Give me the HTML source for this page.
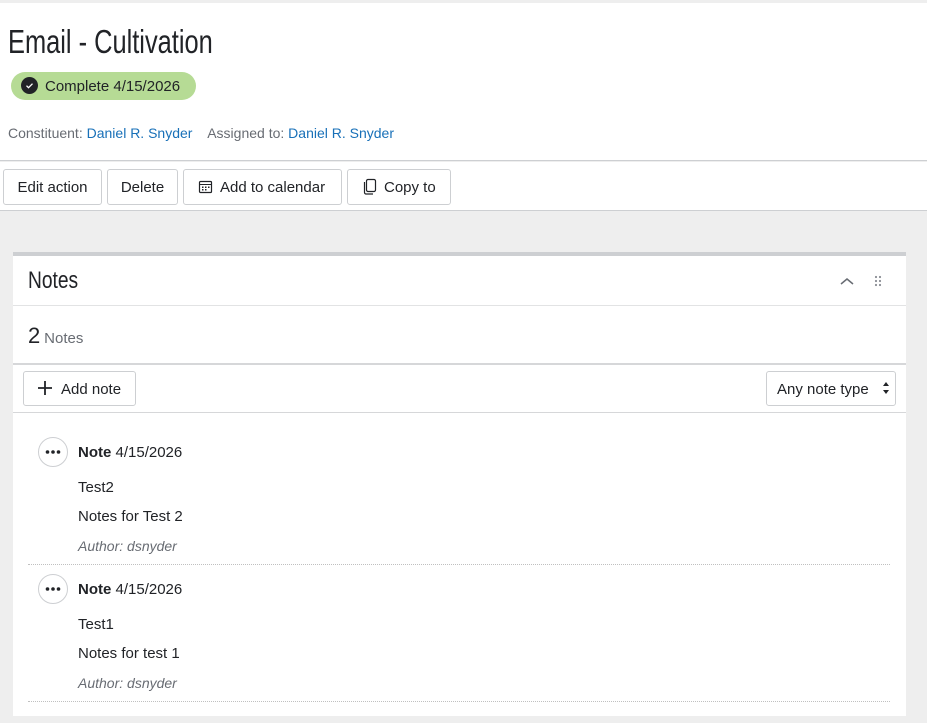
<!DOCTYPE html>
<html><head><meta charset="utf-8"><style>
*{box-sizing:border-box;margin:0;padding:0}
body{width:927px;height:723px;background:#eeeeee;font-family:"Liberation Sans",sans-serif;color:#212327;position:relative;overflow:hidden;font-size:14px}
.a{position:absolute}
.hdr{left:0;top:3px;width:927px;height:158px;background:#fff;border-bottom:1px solid #cdcfd2}
.tb{left:0;top:162px;width:927px;height:49px;background:#fff;border-bottom:1px solid #cdcfd2}
.btn{position:absolute;top:169px;height:36px;border:1px solid #cdcfd2;border-radius:3px;background:#fff;font-size:15px;line-height:36px;color:#212327;white-space:nowrap}
.nar{display:inline-block;transform-origin:left center;transform:scaleX(.84)}
.link{color:#1870b8}
.panel{left:13px;top:252px;width:893px;height:464px;background:#fff;border-top:4px solid #cdcfd2}
.hr{position:absolute;left:13px;width:893px;height:1px;background:#e2e3e4}
.dot{position:absolute;left:28px;width:862px;border-top:1px dotted #c0c0c0}
.circ{position:absolute;left:38px;width:30px;height:30px;border:1px solid #cdcfd2;border-radius:50%}
.t{position:absolute;left:78px;font-size:15px;white-space:nowrap}
</style></head><body>
<div class="a hdr"></div>
<div class="a" style="left:8px;top:23px;font-size:33px;white-space:nowrap"><span class="nar" style="transform:scaleX(.77)">Email - Cultivation</span></div>
<div class="a" style="left:11px;top:72px;width:185px;height:28px;background:#b6db95;border-radius:14px"></div>
<div class="a" style="left:21px;top:77px;width:17px;height:17px;background:#212327;border-radius:50%"><svg width="17" height="17"><path d="M5.5 8.7l2 2 4-4" stroke="#fff" stroke-width="1.3" fill="none"/></svg></div>
<div class="a" style="left:45px;top:78px;font-size:15px;white-space:nowrap">Complete 4/15/2026</div>
<div class="a" style="left:8px;top:125px;font-size:14px;color:#686c73;white-space:nowrap">Constituent: <span class="link">Daniel R. Snyder</span>&nbsp;&nbsp;&nbsp; Assigned to: <span class="link">Daniel R. Snyder</span></div>
<div class="a tb"></div>
<div class="btn" style="left:3px;width:99px;text-align:center">Edit action</div>
<div class="btn" style="left:107px;width:71px;text-align:center">Delete</div>
<div class="btn" style="left:183px;width:159px;padding-left:36px">Add to calendar</div>
<svg class="a" style="left:198px;top:179px" width="16" height="16"><rect x="1.5" y="2.5" width="12" height="11" rx="1" fill="none" stroke="#212327" stroke-width="1.2"/><line x1="1.5" y1="5.5" x2="13.5" y2="5.5" stroke="#212327"/><g fill="#212327"><rect x="4" y="7.5" width="1.5" height="1.5"/><rect x="7" y="7.5" width="1.5" height="1.5"/><rect x="10" y="7.5" width="1.5" height="1.5"/><rect x="4" y="10" width="1.5" height="1.5"/><rect x="7" y="10" width="1.5" height="1.5"/></g></svg>
<div class="btn" style="left:347px;width:104px;padding-left:36px">Copy to</div>
<svg class="a" style="left:362px;top:178px" width="16" height="18"><rect x="4.5" y="1.5" width="9" height="12" rx="1.5" fill="none" stroke="#212327" stroke-width="1.2"/><path d="M2.5 4v10.5a1.5 1.5 0 0 0 1.5 1.5h7" fill="none" stroke="#212327" stroke-width="1.2"/></svg>
<div class="a panel"></div>
<div class="a" style="left:28px;top:267px;font-size:24px;white-space:nowrap"><span class="nar" style="transform:scaleX(.8)">Notes</span></div>
<svg class="a" style="left:839px;top:275px" width="16" height="12"><path d="M2 9l6-5 6 5" stroke="#686c73" stroke-width="1.5" fill="none"/></svg>
<svg class="a" style="left:874px;top:275px" width="8" height="14" fill="#8a8e94"><circle cx="2" cy="2" r="1.1"/><circle cx="6" cy="2" r="1.1"/><circle cx="2" cy="6" r="1.1"/><circle cx="6" cy="6" r="1.1"/><circle cx="2" cy="10" r="1.1"/><circle cx="6" cy="10" r="1.1"/></svg>
<div class="hr" style="top:305px"></div>
<div class="a" style="left:28px;top:323px;white-space:nowrap"><span style="font-size:22px">2</span> <span style="font-size:15px;color:#686c73">Notes</span></div>
<div class="hr" style="top:363px;height:2px;background:#d6d7d9"></div>
<div class="btn" style="left:23px;top:371px;width:113px;height:35px;padding-left:37px;line-height:35px">Add note</div>
<svg class="a" style="left:37px;top:380px" width="16" height="16"><path d="M8 1v14M1 8h14" stroke="#212327" stroke-width="1.8"/></svg>
<div class="btn" style="left:766px;top:371px;width:130px;height:35px;padding-left:10px;line-height:35px">Any note type</div>
<svg class="a" style="left:881px;top:381px" width="10" height="14" fill="#212327"><path d="M5 1l3 4H2z M5 13l3-4H2z"/></svg>
<div class="hr" style="top:412px;background:#d6d7d9"></div>

<div class="circ" style="top:437px"><svg width="28" height="28" fill="#212327"><circle cx="8.5" cy="14" r="1.8"/><circle cx="14" cy="14" r="1.8"/><circle cx="19.5" cy="14" r="1.8"/></svg></div>
<div class="t" style="top:444px"><b>Note</b> 4/15/2026</div>
<div class="t" style="top:479px">Test2</div>
<div class="t" style="top:508px">Notes for Test 2</div>
<div class="t" style="top:538px;font-size:14px;font-style:italic;color:#686c73">Author: dsnyder</div>
<div class="dot" style="top:564px"></div>

<div class="circ" style="top:574px"><svg width="28" height="28" fill="#212327"><circle cx="8.5" cy="14" r="1.8"/><circle cx="14" cy="14" r="1.8"/><circle cx="19.5" cy="14" r="1.8"/></svg></div>
<div class="t" style="top:581px"><b>Note</b> 4/15/2026</div>
<div class="t" style="top:616px">Test1</div>
<div class="t" style="top:645px">Notes for test 1</div>
<div class="t" style="top:675px;font-size:14px;font-style:italic;color:#686c73">Author: dsnyder</div>
<div class="dot" style="top:701px"></div>
</body></html>
